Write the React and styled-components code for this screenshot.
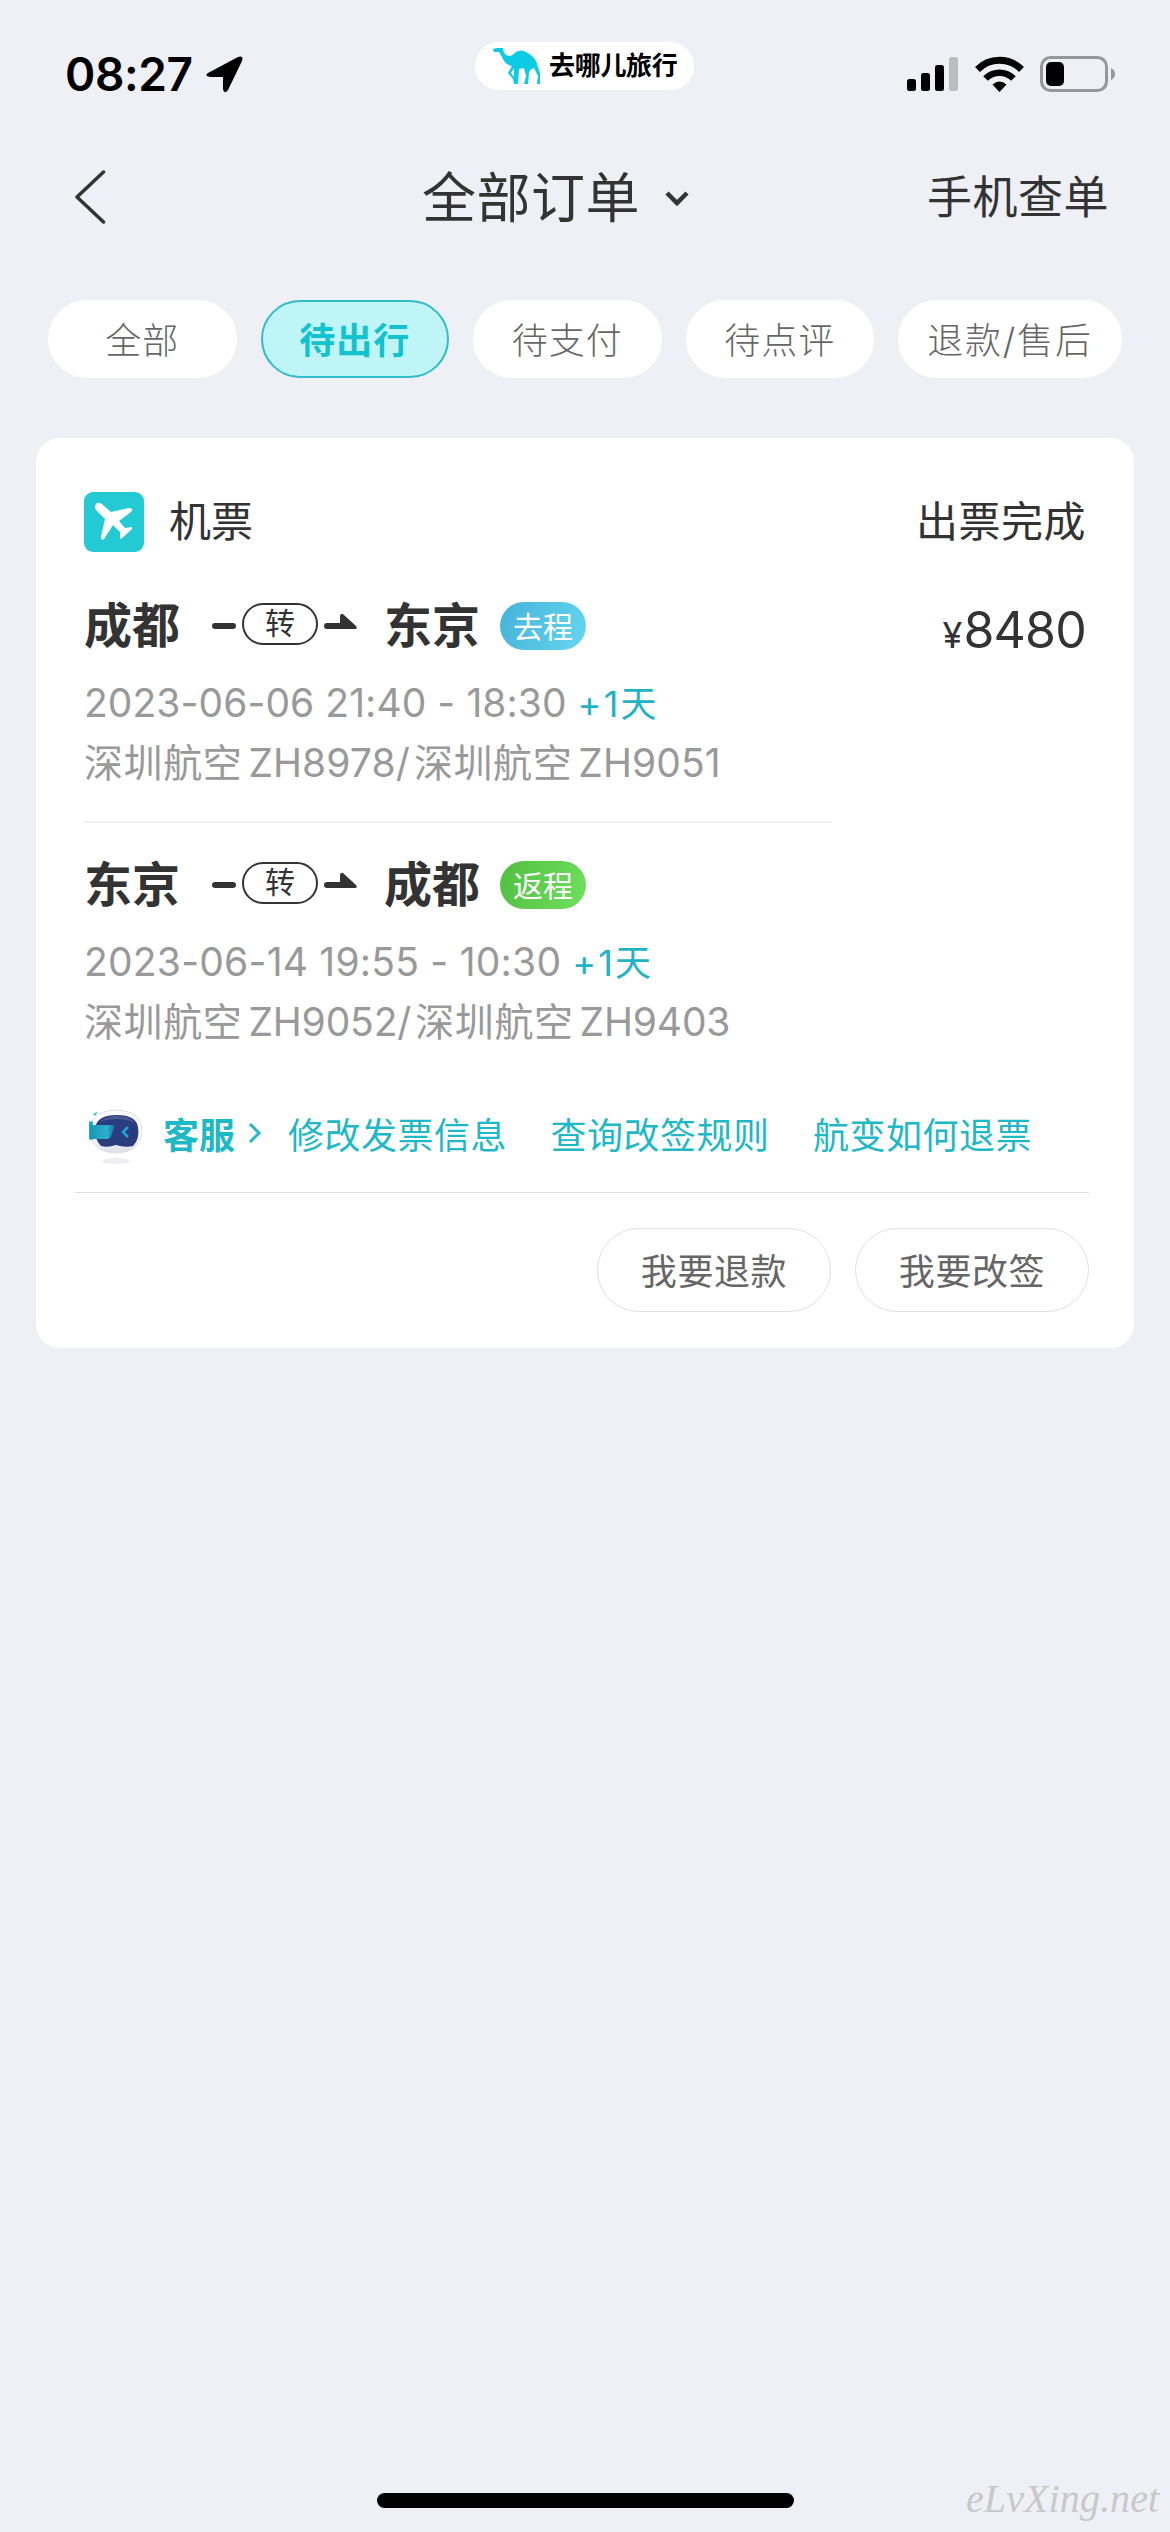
import React from 'react';
import styled, { createGlobalStyle } from 'styled-components';

const GlobalStyle = createGlobalStyle`
  * {
    box-sizing: border-box;
  }
  body {
    margin: 0;
    background: #eff0f5;
    font-family: Inter, 'Noto Sans CJK SC', sans-serif;
    color: #333;
  }
`;

const Page = styled.div`
  width: 1170px;
  height: 2532px;
  background: #eff0f5;
  display: flex;
  flex-direction: column;
  overflow: hidden;
`;

const StatusBar = styled.div`
  height: 141px;
  display: grid;
  grid-template-columns: 475px 219px 1fr;
  align-items: start;
`;

const Clock = styled.div`
  display: flex;
  align-items: center;
  height: 36px;
  margin-top: 56px;
  padding-left: 65px;
  gap: 13px;
  font-size: 46px;
  font-weight: 600;
  letter-spacing: -0.4px;
  color: #000;
`;

const AppBadge = styled.div`
  display: flex;
  align-items: center;
  height: 48px;
  margin-top: 42px;
  padding-left: 18px;
  gap: 8px;
  border-radius: 24px;
  background: #fff;
  font-size: 26px;
  line-height: 44px;
  font-weight: 700;
  letter-spacing: -0.3px;
  color: #000;
  white-space: nowrap;
`;

const StatusIcons = styled.div`
  display: flex;
  align-items: center;
  justify-content: flex-end;
  height: 38px;
  margin-top: 55px;
  padding-right: 54px;
  gap: 16px;
`;

const NavBar = styled.div`
  height: 112px;
  display: grid;
  grid-template-columns: 422px 1fr auto;
  align-items: center;
  padding-right: 61px;
`;

const BackButton = styled.div`
  display: flex;
  padding-left: 74px;
`;

const Title = styled.div`
  display: flex;
  align-items: center;
  gap: 25px;
  padding-top: 3px;
  font-size: 54px;
  line-height: 80px;
  letter-spacing: 0.5px;
`;

const NavLink = styled.div`
  padding-top: 2px;
  font-size: 45px;
  line-height: 66px;
  letter-spacing: 0.5px;
`;

const Tabs = styled.div`
  display: flex;
  gap: 24px;
  padding: 47px 48px 60px;
`;

const Tab = styled.div`
  display: flex;
  align-items: center;
  justify-content: center;
  flex: ${(p) => (p.$wide ? '0 0 224px' : '1 1 0')};
  height: 78px;
  padding-bottom: 3px;
  border-radius: 39px;
  border: 2px solid ${(p) => (p.$active ? '#2fbccb' : '#fff')};
  background: ${(p) => (p.$active ? '#bff5f7' : '#fff')};
  color: ${(p) => (p.$active ? '#12c3cf' : '#666')};
  font-size: 36px;
  font-weight: ${(p) => (p.$active ? 700 : 300)};
  letter-spacing: ${(p) => (p.$wide ? 1.8 : 1)}px;
`;

const Card = styled.div`
  margin: 0 36px;
  height: 910px;
  border-radius: 24px;
  background: #fff;
  display: flex;
  flex-direction: column;
`;

const CardHeader = styled.div`
  display: flex;
  align-items: center;
  height: 60px;
  margin: 54px 48px 0;
`;

const PlaneIcon = styled.svg`
  width: 60px;
  height: 60px;
  margin-right: 25px;
`;

const HeaderText = styled.div`
  font-size: 42px;
  line-height: 54px;
`;

const Status = styled(HeaderText)`
  margin-left: auto;
  letter-spacing: 0.5px;
`;

const CardBody = styled.div`
  display: flex;
  justify-content: space-between;
  margin: 0 48px;
`;

const Legs = styled.div`
  width: 748px;
`;

const Leg = styled.div`
  height: 240px;
  padding-top: 30px;

  &:first-child {
    height: 271px;
    padding-top: 42px;
    border-bottom: 2px solid #f0f0f0;
  }
`;

const Route = styled.div`
  display: flex;
  align-items: center;
  height: 60px;
  margin-bottom: 19px;
`;

const City = styled.div`
  width: 96px;
  padding-top: 3px;
  font-size: 48px;
  font-weight: 700;
  line-height: 60px;
`;

const Transfer = styled.div`
  display: flex;
  align-items: center;
  gap: 6px;
  margin: 0 27px 0 32px;
`;

const TransferLabel = styled.div`
  display: flex;
  align-items: center;
  justify-content: center;
  width: 76px;
  height: 42px;
  padding-bottom: 2px;
  border: 2px solid #333;
  border-radius: 21px;
  font-size: 30px;
  line-height: 30px;
`;

const Direction = styled.div`
  display: flex;
  align-items: center;
  justify-content: center;
  width: 86px;
  height: 48px;
  margin: 4px 0 0 20px;
  padding-bottom: 3px;
  border-radius: 24px;
  background: ${(p) =>
    p.$back
      ? 'linear-gradient(110deg, #52be41, #6fe05f)'
      : 'linear-gradient(110deg, #45b3da, #66d6ef)'};
  color: #fff;
  font-size: 30px;
`;

const Info = styled.div`
  font-size: 39px;
  line-height: 60px;
  color: #999;
  white-space: nowrap;
  letter-spacing: ${(p) => p.$spacing || 0}px;

  & + & {
    margin-top: -1px;
  }
`;

const ExtraDay = styled.span`
  margin-left: 11px;
  font-size: 36px;
  color: #1fb3c3;
  letter-spacing: 2.2px;
`;

const Airline = styled.span`
  letter-spacing: 0.6px;

  & ~ & {
    margin-left: 4px;
  }
`;

const Flight = styled.span`
  margin-left: 6px;
`;

const Price = styled.div`
  display: flex;
  align-items: baseline;
  height: 60px;
  margin-top: 48px;
  font-size: 50px;
  line-height: 60px;
  letter-spacing: -0.8px;
`;

const Currency = styled.span`
  margin-right: 2px;
  font-size: 36px;
`;

const Service = styled.div`
  display: flex;
  align-items: center;
  height: 60px;
  margin: 40px 0 0 48px;
  font-size: 36px;
  color: #1fb8c6;
  white-space: nowrap;
`;

const ServiceName = styled.div`
  margin: 0 13px 0 13px;
  font-weight: 700;
`;

const ServiceLink = styled.div`
  margin-right: 43.5px;
  letter-spacing: 0.5px;
`;

const Actions = styled.div`
  display: flex;
  justify-content: flex-end;
  gap: 24px;
  margin: 29px 45px 0 39px;
  padding-top: 35px;
  border-top: 1px solid #ddd;
`;

const Action = styled.div`
  display: flex;
  align-items: center;
  justify-content: center;
  width: 234px;
  height: 84px;
  padding-bottom: 3px;
  border: 1px solid #e0e0e0;
  border-radius: 42px;
  font-size: 36px;
  letter-spacing: 0.6px;
  color: #666;
`;

const Footer = styled.div`
  display: grid;
  grid-template-columns: 377px 417px 1fr;
  align-items: center;
  height: 64px;
  margin-top: auto;
`;

const HomeIndicator = styled.div`
  grid-column: 2;
  height: 15px;
  border-radius: 8px;
  background: #000;
`;

const Watermark = styled.div`
  padding: 0 0 4px 172px;
  font-family: 'Liberation Serif', serif;
  font-size: 40px;
  font-style: italic;
  letter-spacing: 0.1px;
  color: #c8c8ca;
`;

const tabs = [
  { label: '全部' },
  { label: '待出行', active: true },
  { label: '待支付' },
  { label: '待点评' },
  { label: '退款/售后', wide: true },
];

const legs = [
  {
    from: '成都',
    to: '东京',
    direction: '去程',
    time: '2023-06-06 21:40 - 18:30',
    flights: ['ZH8978/', 'ZH9051'],
    spacing: 0.06,
    flightSpacing: 0.1,
  },
  {
    from: '东京',
    to: '成都',
    direction: '返程',
    back: true,
    time: '2023-06-14 19:55 - 10:30',
    flights: ['ZH9052/', 'ZH9403'],
    spacing: 0.22,
    flightSpacing: -0.15,
  },
];

const links = ['修改发票信息', '查询改签规则', '航变如何退票'];

function TransferMark() {
  return (
    <Transfer>
      <svg width="24" height="30" viewBox="0 0 24 30">
        <rect y="14" width="24" height="6" rx="3" fill="#333" />
      </svg>
      <TransferLabel>转</TransferLabel>
      <svg width="33" height="30" viewBox="0 0 33 30">
        <path d="M3 14H16V7Q17 3 20 6L32 17Q34 20 31 20H3A3 3 0 0 1 3 14Z" fill="#333" />
      </svg>
    </Transfer>
  );
}

function Camel() {
  return (
    <svg width="48" height="37" viewBox="0 0 48 37">
      <path
        d="M0 1L4 0H10L10.5 3Q12 8 17 8Q20 7 23 4Q28 1 33 4Q37 6 40 9Q44 13 44.5 18L47 25V36H44L45 28L41 20Q37 21 36 25L35 36H31L33 28L31 20L26 21L25 36H21L20 31L15 25L19 18Q12 17 9 9L6 4L1 4ZM21 20L18 25L21 29Z"
        fill="#0bcbe5"
        fillRule="evenodd"
      />
    </svg>
  );
}

function Robot() {
  return (
    <svg width="66" height="72" viewBox="0 0 66 72">
      <defs>
        <linearGradient id="shell" x1="0" y1="0" x2="0" y2="1">
          <stop offset="0" stopColor="#fafafd" />
          <stop offset="0.6" stopColor="#fff" />
          <stop offset="1" stopColor="#dcdce8" />
        </linearGradient>
        <linearGradient id="goggles" x1="0" y1="0" x2="1" y2="0">
          <stop offset="0" stopColor="#1597b5" />
          <stop offset="0.7" stopColor="#2fb0d0" />
          <stop offset="1" stopColor="#1f6fa8" />
        </linearGradient>
      </defs>
      <ellipse cx="32" cy="64" rx="14" ry="3" fill="#ededf2" />
      <path
        d="M32 13Q52 13 57 27Q60 40 52 49Q45 56 32 56Q19 56 12 49Q4 40 7 27Q12 13 32 13Z"
        fill="url(#shell)"
        stroke="#dfdfe8"
      />
      <path d="M9 17L14 14.5L11 19Z" fill="#3fc0cb" />
      <path
        d="M11 31Q13 18 33 18Q52 18 54 30Q56 42 49 49Q41 51 32 48Q24 51 17 49Q10 42 11 31Z"
        fill="#293d7e"
      />
      <path d="M16 25Q22 19 33 19Q46 19 51 26Q43 22 33 22Q23 22 16 25Z" fill="#4b5b8f" />
      <rect x="5" y="24" width="4" height="19" rx="2" fill="#27aabb" />
      <path d="M6 28H29Q31 28 30 31L27 39Q26 42 23 42H6Z" fill="url(#goggles)" />
      <path d="M44 30L39 35L44 40" stroke="#1ea7d4" strokeWidth="2.5" fill="none" />
    </svg>
  );
}

export default function App() {
  return (
    <Page>
      <GlobalStyle />
      <StatusBar>
        <Clock>
          08:27
          <svg width="37" height="37" viewBox="0 0 37 37">
            <path d="M2 17L32 1Q38-1 36 5L22 34Q18 39 17 33V21H4Q-2 20 2 17Z" fill="#000" />
          </svg>
        </Clock>
        <AppBadge>
          <Camel />
          去哪儿旅行
        </AppBadge>
        <StatusIcons>
          <svg width="52" height="34" viewBox="0 0 52 34">
            <rect x="0" y="22" width="9" height="12" rx="2.5" />
            <rect x="14" y="16" width="9" height="18" rx="2.5" />
            <rect x="28" y="8" width="9" height="26" rx="2.5" />
            <rect x="42" y="0" width="9" height="34" rx="2.5" fill="#bcbdc1" />
          </svg>
          <svg width="49" height="36" viewBox="0 0 49 36">
            <path d="M2.5 13.5A31 31 0 0 1 46.5 13.5" fill="none" stroke="#000" strokeWidth="7" />
            <path d="M10.5 22.5A20 20 0 0 1 38.5 22.5" fill="none" stroke="#000" strokeWidth="6.5" />
            <path d="M17.5 28.5Q24.5 22.5 31.5 28.5L24.5 36Z" />
          </svg>
          <svg width="76" height="36" viewBox="0 0 76 36">
            <rect x="1.5" y="1.5" width="65" height="33" rx="9" fill="none" stroke="#96979b" strokeWidth="3" />
            <rect x="6" y="6" width="18" height="24" rx="5" />
            <path d="M71 12Q75 14 75 18T71 24Z" fill="#96979b" />
          </svg>
        </StatusIcons>
      </StatusBar>

      <NavBar>
        <BackButton>
          <svg width="32" height="54" viewBox="0 0 32 54">
            <path
              d="M29.5 2L3 27L29.5 52"
              fill="none"
              stroke="#333"
              strokeWidth="3.5"
              strokeLinecap="round"
              strokeLinejoin="round"
            />
          </svg>
        </BackButton>
        <Title>
          全部订单
          <svg width="24" height="16" viewBox="0 0 24 16">
            <path d="M2 2L12 12L22 2" fill="none" stroke="#333" strokeWidth="4.5" />
          </svg>
        </Title>
        <NavLink>手机查单</NavLink>
      </NavBar>

      <Tabs>
        {tabs.map((t) => (
          <Tab key={t.label} $active={t.active} $wide={t.wide}>
            {t.label}
          </Tab>
        ))}
      </Tabs>

      <Card>
        <CardHeader>
          <PlaneIcon viewBox="0 0 60 60">
            <rect width="60" height="60" rx="9" fill="#23cad3" />
            <path
              d="M12 12Q15 9 19 13L27 20L45 16Q50 16 47 20L35 29L41 36L48 35L48 37L37 47L36 46V40L29 33L20 47Q17 49 17 45L21 27L12 18Q10 15 12 12Z"
              fill="#fff"
            />
          </PlaneIcon>
          <HeaderText>机票</HeaderText>
          <Status>出票完成</Status>
        </CardHeader>
        <CardBody>
          <Legs>
            {legs.map((leg) => (
              <Leg key={leg.direction}>
                <Route>
                  <City>{leg.from}</City>
                  <TransferMark />
                  <City>{leg.to}</City>
                  <Direction $back={leg.back}>{leg.direction}</Direction>
                </Route>
                <Info $spacing={leg.spacing}>
                  {leg.time}
                  <ExtraDay>+1天</ExtraDay>
                </Info>
                <Info $spacing={leg.flightSpacing}>
                  <Airline>深圳航空</Airline>
                  <Flight>{leg.flights[0]}</Flight>
                  <Airline>深圳航空</Airline>
                  <Flight>{leg.flights[1]}</Flight>
                </Info>
              </Leg>
            ))}
          </Legs>
          <Price>
            <Currency>¥</Currency>8480
          </Price>
        </CardBody>
        <Service>
          <Robot />
          <ServiceName>客服</ServiceName>
          <svg width="40" height="22" viewBox="0 0 40 22">
            <path d="M2 2L11 11L2 20" fill="none" stroke="#1fb8c6" strokeWidth="3" />
          </svg>
          {links.map((l) => (
            <ServiceLink key={l}>{l}</ServiceLink>
          ))}
        </Service>
        <Actions>
          <Action>我要退款</Action>
          <Action>我要改签</Action>
        </Actions>
      </Card>

      <Footer>
        <HomeIndicator />
        <Watermark>eLvXing.net</Watermark>
      </Footer>
    </Page>
  );
}
